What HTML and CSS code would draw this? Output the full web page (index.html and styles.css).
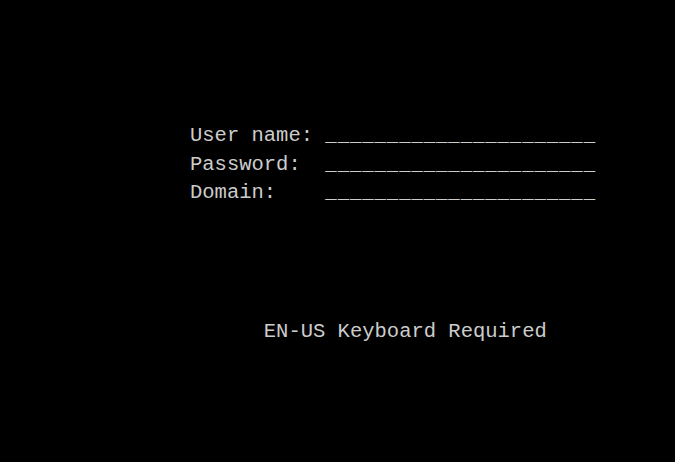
FILE: index.html
```html
<!DOCTYPE html>
<html>
<head>
<meta charset="utf-8">
<link rel="stylesheet" href="styles.css">
</head>
<body>
<main class="console">
<pre class="screen">User name: <span class="blank">______________________</span>
Password:  <span class="blank">______________________</span>
Domain:    <span class="blank">______________________</span>




      EN-US Keyboard Required</pre>
</main>
</body>
</html>
```
FILE: styles.css
```css
html, body {
  margin: 0;
  padding: 0;
  background: #000;
  height: 100%;
  overflow: hidden;
}
.console {
  padding: 122px 0 0 190px;
}
.screen {
  margin: 0;
  font-family: "Liberation Mono", "DejaVu Sans Mono", monospace;
  font-size: 20.5px;
  line-height: 27.6px;
  color: #cccccc;
}
.blank {
  font-size: 19px;
  letter-spacing: 0.9px;
}
```
